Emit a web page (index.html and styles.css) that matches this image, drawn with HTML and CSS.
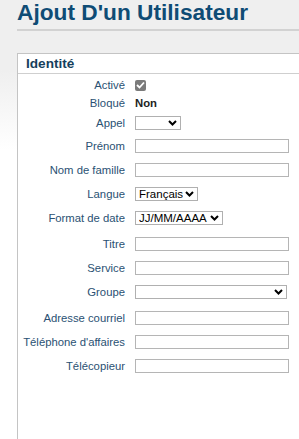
FILE: index.html
```html
<!DOCTYPE html>
<html lang="fr">
<head>
    <meta charset="UTF-8">
    <meta name="viewport" content="width=device-width, initial-scale=1.0">
    <title>Ajout D'un Utilisateur</title>
    <link rel="stylesheet" href="styles.css">
</head>
<body>

    <div class="page">
        <h1>Ajout D'un Utilisateur</h1>

        <div class="panel">
            <div class="panel-head">Identité</div>
            <form class="panel-body">
                <div class="row short">
                    <label>Activé</label>
                    <span class="check">
                        <svg width="9" height="8" viewBox="0 0 9 8"><path d="M1 4l2.5 2.5L8 1.5" fill="none" stroke="#fff" stroke-width="1.8"/></svg>
                    </span>
                </div>
                <div class="row short">
                    <label>Bloqué</label>
                    <span class="value">Non</span>
                </div>
                <div class="row mid">
                    <label>Appel</label>
                    <span class="select w-appel">
                        <select></select>
                        <svg width="9" height="6" viewBox="0 0 9 6"><path d="M1 1l3.5 3.5L8 1" fill="none" stroke="#000" stroke-width="2"/></svg>
                    </span>
                </div>
                <div class="row">
                    <label for="prenom">Prénom</label>
                    <input type="text" id="prenom">
                </div>
                <div class="row">
                    <label for="nom">Nom de famille</label>
                    <input type="text" id="nom">
                </div>
                <div class="row">
                    <label>Langue</label>
                    <span class="select w-langue">
                        <select><option>Français</option></select>
                        <svg width="9" height="6" viewBox="0 0 9 6"><path d="M1 1l3.5 3.5L8 1" fill="none" stroke="#000" stroke-width="2"/></svg>
                    </span>
                </div>
                <div class="row">
                    <label>Format de date</label>
                    <span class="select w-format">
                        <select><option>JJ/MM/AAAA</option></select>
                        <svg width="9" height="6" viewBox="0 0 9 6"><path d="M1 1l3.5 3.5L8 1" fill="none" stroke="#000" stroke-width="2"/></svg>
                    </span>
                </div>
                <div class="row sep">
                    <label for="titre">Titre</label>
                    <input type="text" id="titre">
                </div>
                <div class="row">
                    <label for="service">Service</label>
                    <input type="text" id="service">
                </div>
                <div class="row">
                    <label>Groupe</label>
                    <span class="select w-groupe">
                        <select></select>
                        <svg width="9" height="6" viewBox="0 0 9 6"><path d="M1 1l3.5 3.5L8 1" fill="none" stroke="#000" stroke-width="2"/></svg>
                    </span>
                </div>
                <div class="row sep">
                    <label for="courriel">Adresse courriel</label>
                    <input type="text" id="courriel">
                </div>
                <div class="row">
                    <label for="tel">Téléphone d'affaires</label>
                    <input type="text" id="tel">
                </div>
                <div class="row">
                    <label for="fax">Télécopieur</label>
                    <input type="text" id="fax">
                </div>
            </form>
        </div>
    </div>

</body>
</html>
```

FILE: styles.css
```css
body {
    font-family: "Liberation Sans", Arial, sans-serif;
    margin: 0;
    padding: 0;
    background: linear-gradient(#efefef 0, #efefef 70px, #fff 150px);
    height: 439px;
    overflow: hidden;
}
.page {
    padding-left: 17px;
}
h1 {
    margin: 0 0 22px 0;
    font-size: 22.7px;
    line-height: 24px;
    padding-bottom: 5px;
    color: #0f4c75;
    border-bottom: 2px solid #d2d2d2;
}
.panel {
    background: white;
    border: 1px solid #c4c4c4;
    border-right: none;
    border-bottom: none;
    height: 385px;
}
.panel-head {
    height: 19px;
    line-height: 19px;
    padding-left: 8px;
    font-size: 13.6px;
    font-weight: bold;
    color: #163f5c;
    border-bottom: 1px solid #cfcfcf;
}
.panel-body {
    padding-top: 2px;
}
.row {
    display: flex;
    align-items: center;
    height: 24px;
    font-size: 11.3px;
}
.row.short {
    height: 18px;
}
.row.mid {
    height: 22px;
}
.row.sep {
    margin-top: 2px;
}
.row label {
    width: 107px;
    text-align: right;
    margin-right: 10px;
    color: #2a5173;
}
.row input {
    width: 154px;
    height: 14px;
    box-sizing: border-box;
    border: 1px solid #b5b5b5;
    padding: 0 3px;
    margin: 0;
    background: white;
}
.value {
    font-weight: bold;
    color: #222;
}
.check {
    width: 11px;
    height: 11px;
    border-radius: 2px;
    background: #7b7b7b;
    display: flex;
    align-items: center;
    justify-content: center;
}
.select {
    display: flex;
    align-items: center;
    height: 14px;
    box-sizing: border-box;
    border: 1px solid #b0b0b0;
    background: white;
    padding: 0 3px;
}
.select select {
    appearance: none;
    -webkit-appearance: none;
    border: none;
    background: transparent;
    font-family: "Liberation Sans", Arial, sans-serif;
    font-size: 11.5px;
    color: #000;
    padding: 0;
    margin: 0;
    height: 12px;
    line-height: 12px;
    flex: 1;
    min-width: 0;
    outline: none;
}
.select svg {
    flex: none;
    margin-left: 2px;
}
.w-appel {
    width: 46px;
}
.w-langue {
    width: 63px;
}
.w-format {
    width: 88px;
}
.w-groupe {
    width: 152px;
}
```
